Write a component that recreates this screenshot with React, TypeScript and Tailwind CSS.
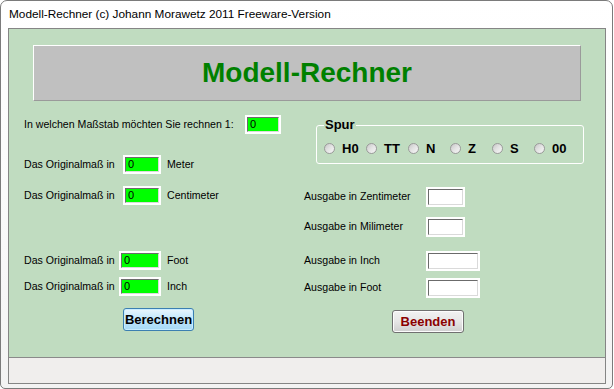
import clsx from 'clsx'

const ui = { fontFamily: '"Liberation Sans", Arial, sans-serif' }

function Field({ w, green }: { w: string; green?: boolean }) {
  return (
    <div className={clsx('h-full shrink-0 bg-white p-[2px]', w)}>
      <div
        className={clsx(
          'flex h-full items-center border-t border-l border-t-[#6b6b6b] border-l-[#6b6b6b] border-r border-b border-r-[#dadada] border-b-[#dadada] pl-[2px] text-[11px] leading-none text-black',
          green ? 'bg-[#00ff00]' : 'bg-white',
        )}
      >
        {green ? '0' : ''}
      </div>
    </div>
  )
}

function Radio({ label }: { label: string }) {
  return (
    <div className="flex w-[42px] shrink-0 items-center gap-[7px]">
      <span className="h-[11px] w-[11px] shrink-0 rounded-full border border-[#9a9a9a] bg-gradient-to-br from-[#c8c8c8] via-[#e4e4e4] to-[#f6f6f6]" />
      <span className="text-[13px] leading-none font-bold text-black">{label}</span>
    </div>
  )
}

function InputRow({
  label,
  labelW,
  fieldW,
  unit,
  gap,
}: {
  label: string
  labelW: string
  fieldW: string
  unit?: string
  gap: string
}) {
  return (
    <div className={clsx('flex h-[19px] items-center', gap)}>
      <span className={clsx('shrink-0 whitespace-nowrap', labelW)}>{label}</span>
      <Field w={fieldW} green />
      {unit && <span className="ml-[6px] whitespace-nowrap">{unit}</span>}
    </div>
  )
}

function OutRow({ label, fieldW, gap }: { label: string; fieldW: string; gap: string }) {
  return (
    <div className={clsx('flex h-[20px] items-center', gap)}>
      <span className="w-[122px] shrink-0 whitespace-nowrap">{label}</span>
      <Field w={fieldW} />
    </div>
  )
}

export default function App() {
  return (
    <div className="h-[389px] w-[614px] overflow-hidden bg-white" style={ui}>
      <div className="flex h-[389px] w-[613px] flex-col rounded-t-[7px] rounded-b-[5px] border border-[#7b7b7b] bg-gradient-to-b from-white via-[#fbfbfb] to-[#f3f3f3] pr-[6px] pb-[4px] pl-[7px]">
        <div className="flex h-[27px] items-center pl-[1px] text-[11.8px] text-black">
          Modell-Rechner (c) Johann Morawetz 2011 Freeware-Version
        </div>
        <div className="flex flex-1 flex-col border border-[#858585]">
          <div className="flex h-[328px] flex-col bg-[#c0dcc0] text-[10.6px] text-black">
            <div className="mx-[24px] mt-[16px] flex h-[56px] items-center justify-center border-t border-l border-t-white border-l-white border-r border-b border-r-[#9a9a9a] border-b-[#9a9a9a] bg-[#c0c0c0]">
              <h1 className="text-[28px] font-bold text-[#008000]">Modell-Rechner</h1>
            </div>

            <div className="flex pl-[15px]">
              <div className="flex w-[280px] flex-col">
                <InputRow label="In welchen Maßstab möchten Sie rechnen 1:" labelW="w-[221px]" fieldW="w-[36px]" gap="mt-[14px]" />
                <InputRow label="Das Originalmaß in" labelW="w-[99px]" fieldW="w-[38px]" unit="Meter" gap="mt-[21px]" />
                <InputRow label="Das Originalmaß in" labelW="w-[99px]" fieldW="w-[38px]" unit="Centimeter" gap="mt-[12px]" />
                <InputRow label="Das Originalmaß in" labelW="w-[95px]" fieldW="w-[42px]" unit="Foot" gap="mt-[46px]" />
                <InputRow label="Das Originalmaß in" labelW="w-[95px]" fieldW="w-[42px]" unit="Inch" gap="mt-[7px]" />
                <button className="mt-[12px] ml-[99px] h-[23px] w-[71px] rounded-[3px] border border-[#3c7fb1] bg-gradient-to-b from-[#eaf6fd] via-[#bee6fd] to-[#a7d9f5] text-[13px] font-bold text-black shadow-[inset_0_0_0_1px_#c8ecff]">
                  Berechnen
                </button>
              </div>

              <div className="flex w-[290px] flex-col">
                <fieldset className="mt-[17px] ml-[12px] h-[46px] w-[265px] rounded-[3px] border border-white px-[7px]">
                  <legend className="px-[1px] text-[13px] leading-[14px] font-bold text-black">Spur</legend>
                  <div className="mt-[10px] flex items-center">
                    {['H0', 'TT', 'N', 'Z', 'S', '00'].map((s) => (
                      <Radio key={s} label={s} />
                    ))}
                  </div>
                </fieldset>
                <OutRow label="Ausgabe in Zentimeter" fieldW="w-[39px]" gap="mt-[23px]" />
                <OutRow label="Ausgabe in Milimeter" fieldW="w-[39px]" gap="mt-[10px]" />
                <OutRow label="Ausgabe in Inch" fieldW="w-[54px]" gap="mt-[14px]" />
                <OutRow label="Ausgabe in Foot" fieldW="w-[54px]" gap="mt-[7px]" />
                <button className="mt-[12px] ml-[88px] h-[23px] w-[72px] rounded-[3px] border border-[#707070] bg-gradient-to-b from-[#f2f2f2] via-[#e6e6e6] to-[#cfcfcf] text-[13px] font-bold text-[#8b0000] shadow-[inset_0_0_0_1px_#fcfcfc]">
                  Beenden
                </button>
              </div>
            </div>
          </div>
          <div className="flex-1 border-t border-[#8a8a8a] bg-[#f0eeed]" />
        </div>
      </div>
    </div>
  )
}
